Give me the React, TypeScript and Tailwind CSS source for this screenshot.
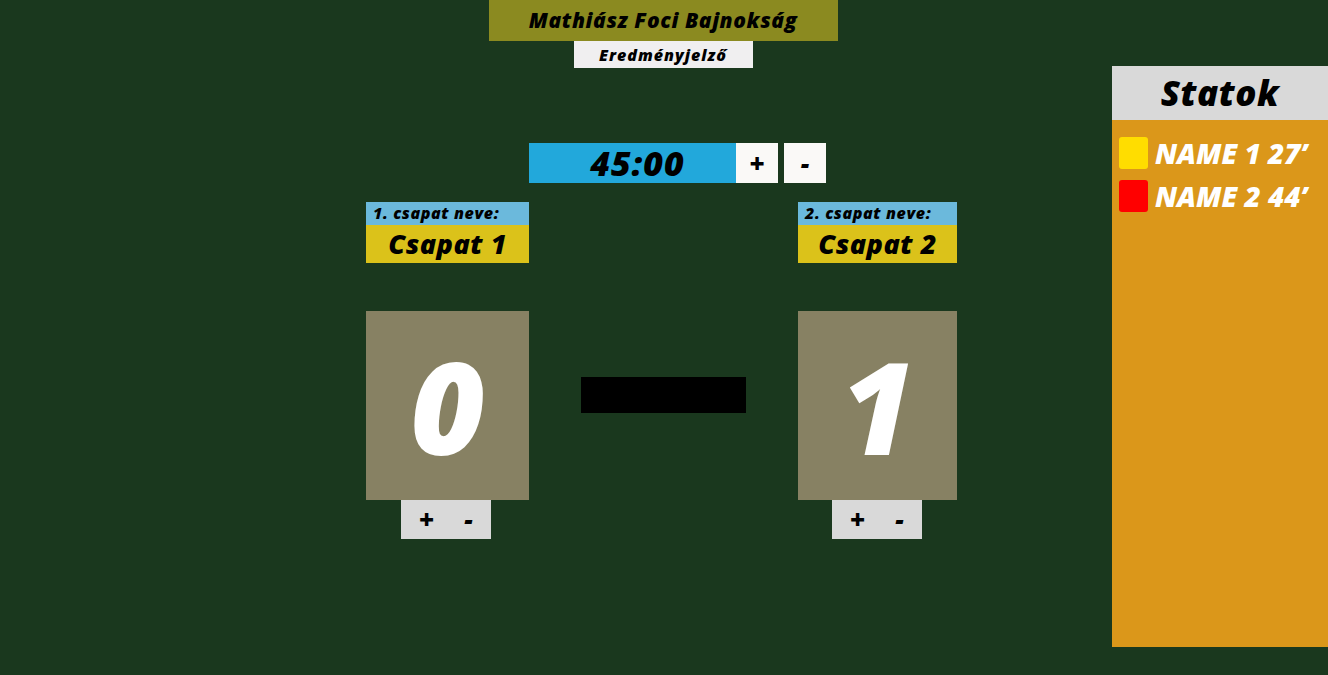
const font = "font-['Open_Sans',_'Liberation_Sans',_sans-serif] italic";

function TeamColumn({ no, name, score, width, btnMargin }: { no: number; name: string; score: number; width: string; btnMargin: string }) {
  return (
    <div className={`flex flex-col ${width}`}>
      <div className="h-[23px] bg-[#6bb9dc] px-[7px] text-[16px] font-extrabold leading-[23px] tracking-[0.6px] text-black">
        {no}. csapat neve:
      </div>
      <div className="flex h-[38px] items-center justify-center bg-[#dbc21a] text-[27px] font-extrabold tracking-[0.5px] text-black">
        {name}
      </div>
      <div className="mt-[48px] flex h-[189px] items-center justify-center bg-[#878163] text-[128px] font-extrabold text-white">
        {score}
      </div>
      <div className={`flex h-[39px] w-[90px] items-center justify-center gap-[30px] bg-[#d9d9d9] text-black ${btnMargin}`}>
        <span className="text-[26px] font-extrabold">+</span>
        <span className="text-[26px] font-extrabold">-</span>
      </div>
    </div>
  );
}

export default function App() {
  const stats = [
    { color: 'bg-[#ffdd00]', text: 'NAME 1 27’' },
    { color: 'bg-[#ff0000]', text: 'NAME 2 44’' },
  ];

  return (
    <div className={`flex min-h-[675px] w-full bg-[#1a381e] ${font}`}>
      <main className="flex flex-1 flex-col">
        {/* Header */}
        <header className="flex flex-col items-center pl-[214px]">
          <div className="flex h-[41px] w-[349px] items-center justify-center bg-[#8b8a20] text-[21px] font-extrabold tracking-[0.6px] text-black">
            Mathiász Foci Bajnokság
          </div>
          <div className="flex h-[27px] w-[179px] items-center justify-center bg-[#f0eff0] text-[16px] font-extrabold tracking-[1px] text-black">
            Eredményjelző
          </div>
        </header>

        {/* Timer */}
        <div className="ml-[529px] mt-[75px] flex h-[40px] gap-[6px]">
          <div className="flex">
            <div className="flex w-[207px] items-center justify-center bg-[#22a8db] pl-[10px] text-[34px] font-extrabold tracking-[1px] text-black">
              45:00
            </div>
            <button className="flex w-[42px] items-center justify-center bg-[#faf9f7] text-[26px] font-extrabold text-black">
              +
            </button>
          </div>
          <button className="flex w-[42px] items-center justify-center bg-[#faf9f7] text-[26px] font-extrabold text-black">
            -
          </button>
        </div>

        {/* Teams + scores */}
        <div className="ml-[366px] mt-[19px] flex">
          <TeamColumn no={1} name="Csapat 1" score={0} width="w-[163px]" btnMargin="ml-[35px]" />
          <div className="w-[269px] px-[52px] pt-[175px]">
            <div className="h-[36px] w-[165px] bg-black" />
          </div>
          <TeamColumn no={2} name="Csapat 2" score={1} width="w-[159px]" btnMargin="ml-[34px]" />
        </div>
      </main>

      {/* Stats */}
      <aside className="mt-[66px] flex h-[581px] w-[216px] flex-col bg-[#db971a]">
        <div className="flex h-[54px] items-center justify-center bg-[#d9d9d9] text-[35px] font-extrabold tracking-[0.5px] text-black">
          Statok
        </div>
        <div className="flex flex-col gap-[11px] px-[7px] pt-[17px]">
          {stats.map((s) => (
            <div key={s.text} className="flex h-[32px] items-center gap-[7px]">
              <div className={`h-[32px] w-[29px] rounded-[3px] ${s.color}`} />
              <span className="text-[28px] font-extrabold leading-[32px] text-white">{s.text}</span>
            </div>
          ))}
        </div>
      </aside>
    </div>
  );
}
